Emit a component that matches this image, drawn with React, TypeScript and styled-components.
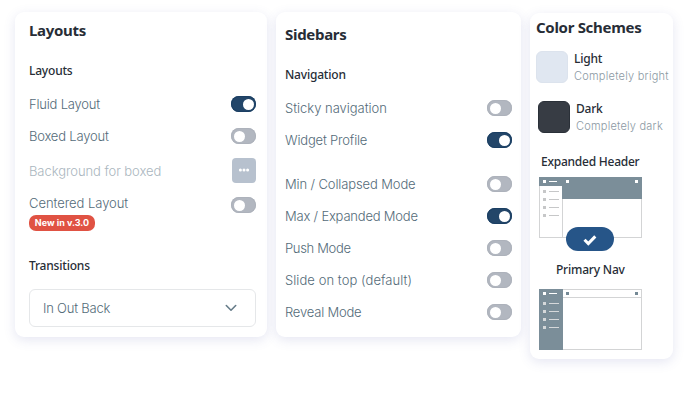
import React from "react";
import styled, { createGlobalStyle } from "styled-components";

const GlobalStyle = createGlobalStyle`
  * { box-sizing: border-box; }
  body { margin: 0; background: #fff; overflow: hidden; }
`;

const Page = styled.main`
  width: 684px;
  height: 400px;
  padding: 12px 0 0 15px;
  display: flex;
  align-items: flex-start;
  background: #fff;
  color: #546b79;
  font: 300 13px/20px Inter, sans-serif;
  white-space: nowrap;
`;

const Card = styled.section<{ $w: number; $h: number; $pad: string; $ml?: number; $mt?: number }>`
  width: ${(p) => p.$w}px;
  height: ${(p) => p.$h}px;
  margin: ${(p) => p.$mt ?? 0}px 0 0 ${(p) => p.$ml ?? 0}px;
  padding: ${(p) => p.$pad};
  flex: none;
  border-radius: 9px;
  background: #fff;
  box-shadow: 0 3px 12px rgba(80, 90, 170, 0.15);
`;

const Title = styled.h2`
  margin: 0;
  color: #272d36;
  font: 700 15px/20px "Noto Sans", sans-serif;
  letter-spacing: -0.3px;
`;

const Subtitle = styled.h3<{ $mt?: number; $ml?: number; $ls?: number }>`
  margin: ${(p) => p.$mt ?? 0}px 0 0 ${(p) => p.$ml ?? 0}px;
  color: #272d36;
  font: 500 12px/16px "Noto Sans", sans-serif;
  letter-spacing: ${(p) => p.$ls ?? -0.2}px;
`;

const Row = styled.div<{ $h?: number; $mt?: number; $top?: boolean }>`
  height: ${(p) => p.$h ?? 32}px;
  margin-top: ${(p) => p.$mt ?? 0}px;
  display: flex;
  align-items: ${(p) => (p.$top ? "flex-start" : "center")};
  justify-content: space-between;
`;

const Label = styled.span<{ $ls?: number; $muted?: boolean }>`
  letter-spacing: ${(p) => p.$ls ?? 0}px;
  color: ${(p) => (p.$muted ? "#aab6be" : "inherit")};
`;

const CenteredLabel = styled(Label)`
  margin-top: 4px;
  letter-spacing: -0.05px;
`;

const Switch = styled.span<{ $on?: boolean }>`
  width: 25px;
  height: 16px;
  padding: 0 2.5px;
  flex: none;
  display: flex;
  align-items: center;
  justify-content: ${(p) => (p.$on ? "flex-end" : "flex-start")};
  border-radius: 8px;
  background: ${(p) => (p.$on ? "#234669" : "#b2b7c0")};
  box-shadow: inset 0 0 0 1px ${(p) => (p.$on ? "#1b3f63" : "#adb2bb")};
  &::after {
    content: "";
    width: 11px;
    height: 11px;
    border-radius: 50%;
    background: #fff;
  }
`;

const LoweredSwitch = styled(Switch)`
  margin-top: 8px;
`;

const MoreButton = styled.span`
  width: 24px;
  height: 25px;
  display: flex;
  align-items: center;
  justify-content: center;
  padding-bottom: 1px;
  border-radius: 4px;
  background: #b7c1ce;
`;

const Stack = styled.div`
  display: flex;
  flex-direction: column;
  align-items: flex-start;
`;

const Badge = styled.span`
  width: 66px;
  height: 16px;
  margin-top: 2px;
  border-radius: 7px;
  background: #e05243;
  color: #fff;
  font: 700 9px/16px Inter, sans-serif;
  text-align: center;
`;

const Select = styled.div`
  height: 38px;
  margin-top: 15px;
  padding: 0 18px 0 13px;
  display: flex;
  align-items: center;
  justify-content: space-between;
  border: 1px solid #e5e7e9;
  border-radius: 6px;
`;

const Scheme = styled.div<{ $ml?: number; $mt: number }>`
  height: 32px;
  margin: ${(p) => p.$mt}px 0 0 ${(p) => p.$ml ?? 0}px;
  display: flex;
  gap: 6px;
`;

const Swatch = styled.span<{ $c: string; $edge: string }>`
  width: 32px;
  height: 32px;
  flex: none;
  border-radius: 6px;
  background: ${(p) => p.$c};
  border: 1px solid ${(p) => p.$edge};
`;

const Caption = styled.span<{ $ls: number }>`
  margin-top: 1px;
  color: #8b99a3;
  font-size: 11px;
  line-height: 17px;
  letter-spacing: ${(p) => p.$ls}px;
`;

const Preview = styled.div<{ $mt: number }>`
  position: relative;
  width: 103px;
  height: 61px;
  margin: ${(p) => p.$mt}px 0 0 3px;
  svg { display: block; }
`;

const Picked = styled.span`
  position: absolute;
  left: 27px;
  top: 50px;
  width: 48px;
  height: 24px;
  display: flex;
  align-items: center;
  justify-content: center;
  padding-top: 1px;
  border-radius: 12px;
  background: #265588;
`;

const Setting = ({ text, ls, on, mt }: { text: string; ls?: number; on?: boolean; mt?: number }) => (
  <Row $mt={mt}>
    <Label $ls={ls}>{text}</Label>
    <Switch $on={on} />
  </Row>
);

const MenuMarks = ({ top, fill }: { top: number; fill: string }) => (
  <g fill={fill}>
    {[0, 8, 16, 24].map((y) => (
      <React.Fragment key={y}>
        <rect x="4" y={top + y} width="3" height="3" />
        <rect x="10" y={top + y + 1} width="10" height="1" />
      </React.Fragment>
    ))}
  </g>
);

const ExpandedHeader = () => (
  <svg width="103" height="61" shapeRendering="crispEdges">
    <rect x=".5" y=".5" width="102" height="60" fill="#fff" stroke="#d3d4d5" />
    <rect width="103" height="22" fill="#7b8e99" />
    <rect x="1" y="9" width="22" height="51" fill="#fff" />
    <rect x="0" y="9" width="1" height="52" fill="#d3d4d5" />
    <rect x="23" y="22" width="1" height="38" fill="#d3d4d5" />
    <path d="M4 3h3v3H4zM10 4h8v1h-8zM27 3h3v3h-3zM96 3h3v3h-3z" fill="#fff" />
    <MenuMarks top={13} fill="#c6c7c8" />
  </svg>
);

const PrimaryNav = () => (
  <svg width="103" height="61" shapeRendering="crispEdges">
    <rect x=".5" y=".5" width="102" height="60" fill="#fff" stroke="#d3d4d5" />
    <rect x="24" y="8" width="78" height="1" fill="#d3d4d5" />
    <rect width="24" height="61" fill="#7b8e99" />
    <path d="M4 3h3v3H4zM10 4h8v1h-8z" fill="#fff" />
    <path d="M27 3h3v3h-3zM96 3h3v3h-3z" fill="#748995" />
    <MenuMarks top={13} fill="#d5d8da" />
  </svg>
);

export default function App() {
  return (
    <>
      <GlobalStyle />
      <Page>
        <Card $w={252} $h={325} $pad="8px 11px 0 14px">
          <Title>Layouts</Title>
          <Subtitle $mt={23}>Layouts</Subtitle>
          <Setting mt={9} text="Fluid Layout" ls={-0.2} on />
          <Setting text="Boxed Layout" ls={-0.2} />
          <Row $h={37}>
            <Label $ls={-0.07} $muted>Background for boxed</Label>
            <MoreButton>
              <svg width="12" height="4" fill="#fff">
                <circle cx="2.4" cy="2" r="1.5" />
                <circle cx="6" cy="2" r="1.5" />
                <circle cx="9.6" cy="2" r="1.5" />
              </svg>
            </MoreButton>
          </Row>
          <Row $h={42} $top>
            <Stack>
              <CenteredLabel>Centered Layout</CenteredLabel>
              <Badge>New in v.3.0</Badge>
            </Stack>
            <LoweredSwitch />
          </Row>
          <Subtitle $mt={27}>Transitions</Subtitle>
          <Select>
            <Label $ls={-0.2}>In Out Back</Label>
            <svg width="12" height="8" viewBox="0 0 12 8" fill="none" stroke="#667c89" strokeWidth="1.6" strokeLinecap="round" strokeLinejoin="round">
              <path d="M1.3 1.5L6 6.2l4.7-4.7" />
            </svg>
          </Select>
        </Card>

        <Card $w={245} $h={325} $ml={9} $pad="12px 9px 0 9px">
          <Title>Sidebars</Title>
          <Subtitle $mt={23}>Navigation</Subtitle>
          <Setting mt={9} text="Sticky navigation" ls={-0.02} />
          <Setting text="Widget Profile" ls={-0.18} on />
          <Setting mt={12} text="Min / Collapsed Mode" ls={-0.12} />
          <Setting text="Max / Expanded Mode" ls={-0.2} on />
          <Setting text="Push Mode" ls={-0.32} />
          <Setting text="Slide on top (default)" ls={0.06} />
          <Setting text="Reveal Mode" ls={-0.2} />
        </Card>

        <Card $w={143} $h={346} $ml={9} $mt={1} $pad="4px 0 0 6px">
          <Title>Color Schemes</Title>
          <Scheme $mt={14}>
            <Swatch $c="#e0e7f1" $edge="#dce3ed" />
            <Stack>
              <Subtitle>Light</Subtitle>
              <Caption $ls={0.24}>Completely bright</Caption>
            </Stack>
          </Scheme>
          <Scheme $mt={18} $ml={2}>
            <Swatch $c="#373c44" $edge="#2a3038" />
            <Stack>
              <Subtitle>Dark</Subtitle>
              <Caption $ls={0.22}>Completely dark</Caption>
            </Stack>
          </Scheme>
          <Subtitle $mt={21} $ml={5} $ls={-0.24}>Expanded Header</Subtitle>
          <Preview $mt={7}>
            <ExpandedHeader />
            <Picked>
              <svg width="14" height="12" viewBox="0 0 14 12" fill="none" stroke="#fff" strokeWidth="3">
                <path d="M1.5 5.8l3.8 3.8 7-7.2" />
              </svg>
            </Picked>
          </Preview>
          <Subtitle $mt={24} $ml={20}>Primary Nav</Subtitle>
          <Preview $mt={11}>
            <PrimaryNav />
          </Preview>
        </Card>
      </Page>
    </>
  );
}
